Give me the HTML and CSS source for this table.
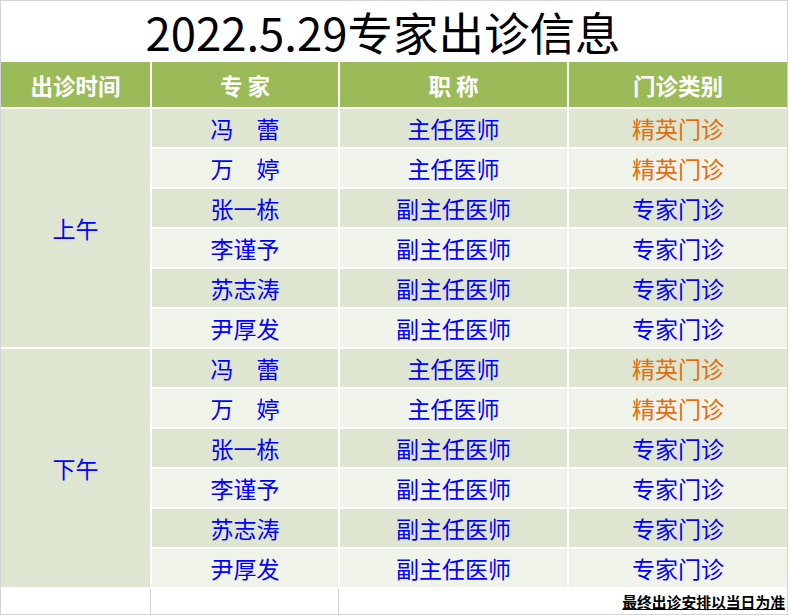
FILE: index.html
```html
<!DOCTYPE html>
<html lang="zh-CN">
<head>
<meta charset="utf-8">
<title>2022.5.29专家出诊信息</title>
<link rel="stylesheet" href="styles.css">
</head>
<body>
<div class="sheet">
  <div class="title"><span class="title-text">2022.5.29专家出诊信息</span></div>
  <div class="table">
    <div class="hd">出诊时间</div>
    <div class="hd">专 家</div>
    <div class="hd">职 称</div>
    <div class="hd">门诊类别</div>

    <div class="period p1">上午</div>
    <div class="c odd">冯　蕾</div><div class="c odd">主任医师</div><div class="c odd orange">精英门诊</div>
    <div class="c even">万　婷</div><div class="c even">主任医师</div><div class="c even orange">精英门诊</div>
    <div class="c odd">张一栋</div><div class="c odd">副主任医师</div><div class="c odd">专家门诊</div>
    <div class="c even">李谨予</div><div class="c even">副主任医师</div><div class="c even">专家门诊</div>
    <div class="c odd">苏志涛</div><div class="c odd">副主任医师</div><div class="c odd">专家门诊</div>
    <div class="c even">尹厚发</div><div class="c even">副主任医师</div><div class="c even">专家门诊</div>

    <div class="period p2">下午</div>
    <div class="c odd">冯　蕾</div><div class="c odd">主任医师</div><div class="c odd orange">精英门诊</div>
    <div class="c even">万　婷</div><div class="c even">主任医师</div><div class="c even orange">精英门诊</div>
    <div class="c odd">张一栋</div><div class="c odd">副主任医师</div><div class="c odd">专家门诊</div>
    <div class="c even">李谨予</div><div class="c even">副主任医师</div><div class="c even">专家门诊</div>
    <div class="c odd">苏志涛</div><div class="c odd">副主任医师</div><div class="c odd">专家门诊</div>
    <div class="c even">尹厚发</div><div class="c even">副主任医师</div><div class="c even">专家门诊</div>
  </div>
  <div class="footer">
    <div class="f f1"></div>
    <div class="f f2"></div>
    <div class="f f3"></div>
    <div class="f f4"><span class="note">最终出诊安排以当日为准</span></div>
  </div>
</div>
</body>
</html>
```

FILE: styles.css
```css
html, body {
  margin: 0;
  padding: 0;
  background: #ffffff;
}

body {
  font-family: "Noto Sans CJK SC", "Noto Sans", sans-serif;
}

.sheet {
  width: 786px;
  height: 613px;
  border: 1px solid #d4d4d4;
  background: #ffffff;
  display: flex;
  flex-direction: column;
}

.title {
  height: 61px;
  display: flex;
  align-items: center;
  justify-content: center;
  padding-right: 22px;
}

.title-text {
  font-size: 45.5px;
  line-height: 61px;
  color: #000000;
  white-space: nowrap;
}

.table {
  display: grid;
  grid-template-columns: 149px 186px 227px 218px;
  grid-template-rows: 45px repeat(12, 38px);
  column-gap: 2px;
  row-gap: 2px;
  background: #ffffff;
  padding-bottom: 2px;
}

.hd {
  background: #9bbb59;
  color: #ffffff;
  font-weight: bold;
  font-size: 22.5px;
  display: flex;
  align-items: center;
  justify-content: center;
  white-space: pre;
}

.period {
  grid-column: 1;
  background: #dee6d1;
  color: #0000ff;
  font-size: 23px;
  display: flex;
  align-items: center;
  justify-content: center;
}

.p1 { grid-row: 2 / span 6; }
.p2 { grid-row: 8 / span 6; }

.c {
  color: #0000ff;
  font-size: 23px;
  display: flex;
  align-items: center;
  justify-content: center;
  white-space: pre;
}

.odd { background: #dee6d1; }
.even { background: #eff3e9; }

.orange { color: #e46c0a; }

.footer {
  display: grid;
  grid-template-columns: 150px 188px 229px 219px;
  flex: 1;
}

.f1, .f2 {
  border-right: 1px solid #d4d4d4;
}

.f4 {
  display: flex;
  align-items: center;
  justify-content: flex-end;
  padding-right: 2px;
}

.note {
  font-size: 14.8px;
  font-weight: bold;
  color: #000000;
  text-decoration: underline;
  white-space: nowrap;
}
```
